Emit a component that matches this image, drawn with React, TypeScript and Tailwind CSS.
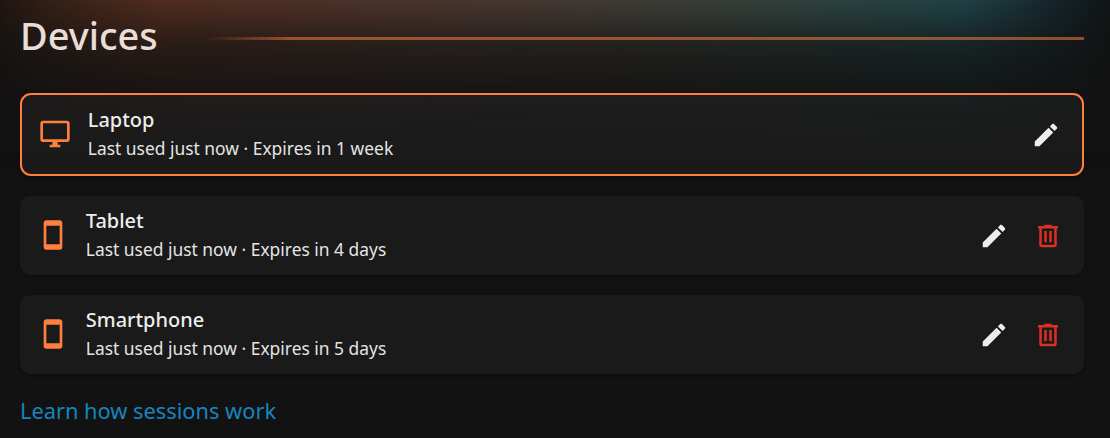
import React from "react";

const MONITOR =
  "M21,16H3V4H21M21,2H3C1.89,2 1,2.89 1,4V16A2,2 0 0,0 3,18H10V20H8V22H16V20H14V18H21A2,2 0 0,0 23,16V4C23,2.89 22.1,2 21,2Z";
const PHONE =
  "M17,19H7V5H17M17,1H7C5.89,1 5,1.89 5,3V21A2,2 0 0,0 7,23H17A2,2 0 0,0 19,21V3C19,1.89 18.1,1 17,1Z";
const PENCIL =
  "M20.71,7.04C21.1,6.65 21.1,6 20.71,5.63L18.37,3.29C18,2.9 17.35,2.9 16.96,3.29L15.12,5.12L18.87,8.87M3,17.25V21H6.75L17.81,9.93L14.06,6.18L3,17.25Z";
const TRASH =
  "M9,3V4H4V6H5V19A2,2 0 0,0 7,21H17A2,2 0 0,0 19,19V6H20V4H15V3H9M7,6H17V19H7V6M9,8V17H11V8H9M13,8V17H15V8H13Z";

function Icon({ path, className }: { path: string; className: string }) {
  return (
    <svg viewBox="0 0 24 24" fill="currentColor" className={className} aria-hidden="true">
      <path d={path} />
    </svg>
  );
}

type Device = { name: string; detail: string; icon: string; current?: boolean };

const devices: Device[] = [
  { name: "Laptop", detail: "Last used just now · Expires in 1 week", icon: MONITOR, current: true },
  { name: "Tablet", detail: "Last used just now · Expires in 4 days", icon: PHONE },
  { name: "Smartphone", detail: "Last used just now · Expires in 5 days", icon: PHONE },
];

function DeviceCard({ device }: { device: Device }) {
  return (
    <li
      className={
        "flex items-center rounded-[11px] bg-white/[0.035] pl-[17px] pr-[21px] shadow-[0_2px_4px_rgba(0,0,0,0.25)] " +
        (device.current ? "h-[83px] border-2 border-[#ff7f3f]" : "h-[79px]")
      }
    >
      <Icon path={device.icon} className="-mt-px size-[32px] shrink-0 text-[#ff7f3f]" />
      <div className="ml-[16.8px] flex grow flex-col pb-[2px]">
        <span className="text-[19.95px] font-medium leading-[29px] text-[#ededed]">{device.name}</span>
        <span className="text-[17.41px] leading-[29px] text-[#e4e4e4]">{device.detail}</span>
      </div>
      <div className="flex gap-[24px]">
        <button aria-label="Rename">
          <Icon path={PENCIL} className="size-[30px] text-[#ededed]" />
        </button>
        {!device.current && (
          <button aria-label="Delete">
            <Icon path={TRASH} className="size-[30px] text-[#dc2f25]" />
          </button>
        )}
      </div>
    </li>
  );
}

export default function App() {
  return (
    <div className="relative isolate h-[438px] overflow-hidden bg-[#121212] font-['Noto_Sans',sans-serif]">
      <div className="absolute inset-x-0 top-0 -z-10 h-[170px] bg-[linear-gradient(90deg,#1e1611_0px,#301f15_40px,#42261a_100px,#502c1d_160px,#4d3026_300px,#4a342c_420px,#403933_600px,#353f39_740px,#29423f_850px,#204145_960px,#1b363b_1000px,#15252a_1055px,#111415_1110px)] [mask-image:linear-gradient(180deg,#000_0px,rgba(0,0,0,0.8)_16px,rgba(0,0,0,0.46)_38px,rgba(0,0,0,0.27)_60px,rgba(0,0,0,0.12)_90px,rgba(0,0,0,0.05)_120px,transparent_170px)]" />
      <main className="flex flex-col pl-5 pr-[26px]">
        <header className="flex h-[76px] items-center">
          <h1 className="w-[185px] pb-[5px] text-[37.9px] font-medium leading-none text-[#eaddd7]">Devices</h1>
          <div className="h-[3px] grow bg-[linear-gradient(90deg,transparent_0%,#ff7f3f_10%)] opacity-[0.53]" />
        </header>
        <ul className="mt-[17px] flex flex-col gap-5">
          {devices.map((d) => (
            <DeviceCard key={d.name} device={d} />
          ))}
        </ul>
        <a href="#" className="mt-[22px] self-start text-[21.8px] leading-[30px] text-[#1785be]">
          Learn how sessions work
        </a>
      </main>
    </div>
  );
}
